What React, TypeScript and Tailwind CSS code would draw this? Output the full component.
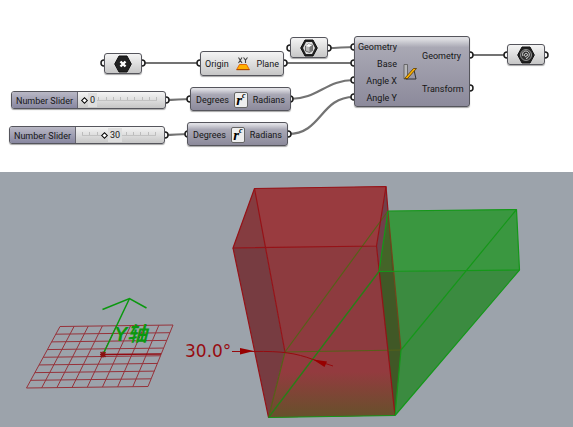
import React, { useState } from "react";

type Point = [number, number];

const silver = "bg-linear-to-b from-[#f4f4f4] via-[#dedede] to-[#c6c6c6]";
const slate = "bg-linear-to-b from-[#e0e0e5] from-5% via-[#a9a8b5] via-30% to-[#8c8a9b]";
const frame = "rounded-[3px] border border-[#55555c] shadow-[0_1px_1px_rgba(0,0,0,0.35)]";

const wires = [
  "M142 63H200",
  "M284 63H354",
  "M166 100C175 100 181 99 190 99",
  "M165 135C174 135 179 134 188 134",
  "M328 48C338 48 344 47 354 47",
  "M290 99C318 99 326 80 354 80",
  "M288 134C322 134 320 97 354 97",
  "M470 55H507",
];

const leftPorts: Point[] = [
  [104, 63], [200, 63], [190, 99], [188, 134], [290, 48],
  [354, 47], [354, 63], [354, 80], [354, 97], [507, 55],
];

const rightPorts: Point[] = [
  [142, 63], [284, 63], [166, 100], [165, 135], [290, 99],
  [288, 134], [328, 48], [470, 55], [470, 88], [545, 55],
];

function Wires() {
  return (
    <svg className="absolute left-0 top-0 h-[172px] w-[573px]" viewBox="0 0 573 172" fill="none" aria-hidden="true">
      {wires.map((d) => (
        <path key={d} d={d} stroke="#737373" strokeWidth="2.2" />
      ))}
      {leftPorts.map(([x, y]) => (
        <circle key={`l${x}-${y}`} cx={x} cy={y} r="3" fill="#fff" stroke="#1c1c1c" strokeWidth="1.5" />
      ))}
      {rightPorts.map(([x, y]) => (
        <circle key={`r${x}-${y}`} cx={x} cy={y} r="3" fill="#fff" stroke="#1c1c1c" strokeWidth="1.5" />
      ))}
    </svg>
  );
}

function Hexagon({ children }: { children: React.ReactNode }) {
  return (
    <svg className="h-[18px] w-[18px]" viewBox="0 0 18 18" aria-hidden="true">
      <path d="M5 1H13L17.300 9L13 17H5L.7 9Z" fill="#222" stroke="#111" strokeLinejoin="round" />
      {children}
    </svg>
  );
}

function Param({ place, children }: { place: string; children: React.ReactNode }) {
  return (
    <div className={`absolute flex h-[21px] w-[38px] items-center justify-center ${place} ${frame} ${silver}`}>
      <Hexagon>{children}</Hexagon>
    </div>
  );
}

function Radians({ place }: { place: string }) {
  return (
    <div className={`absolute flex h-6 w-[101px] items-center justify-between px-[5px] pt-px ${place} ${frame} ${slate}`}>
      <span>Degrees</span>
      <span className="flex h-4 w-[14px] items-start justify-center rounded-[2px] border border-[#666] bg-[#eeeeee] font-['Liberation_Serif',serif] text-[15px] font-bold italic leading-[14px] text-black">
        r<span className="text-[8px] leading-[6px]">c</span>
      </span>
      <span>Radians</span>
    </div>
  );
}

function NumberSlider({ id, place, initial, track }: { id: string; place: string; initial: number; track: string }) {
  const [value, setValue] = useState(initial);
  return (
    <div className={`absolute flex h-[18px] overflow-hidden ${place} ${frame} ${silver}`}>
      <label
        htmlFor={id}
        className="flex w-[66px] shrink-0 items-center justify-center border-r border-[#66656f] bg-linear-to-b from-[#b9b8c5] to-[#8887a0] pt-px"
      >
        Number Slider
      </label>
      <div className={`relative mr-1.5 flex-1 ${track}`}>
        <div className="absolute inset-x-[2px] top-[3px] flex h-[6px] justify-between border-b border-[#c2c2c2]">
          {Array.from({ length: 11 }, (_, i) => (
            <span key={i} className="mt-0.5 w-px bg-[#bcbcbc]" />
          ))}
        </div>
        <output
          htmlFor={id}
          className="absolute top-px ml-1 flex h-[14px] items-center bg-[#dedede] pl-0.5 pr-0.5"
          style={{ left: `calc(${value}% + ${2 - value * 0.05}px)` }}
        >
          {value}
        </output>
        <input
          id={id}
          type="range"
          min={0}
          max={100}
          value={value}
          onChange={(e) => setValue(Number(e.target.value))}
          className="absolute inset-0 h-4 w-full appearance-none bg-transparent [&::-webkit-slider-thumb]:h-[5px] [&::-webkit-slider-thumb]:w-[5px] [&::-webkit-slider-thumb]:rotate-45 [&::-webkit-slider-thumb]:appearance-none [&::-webkit-slider-thumb]:border [&::-webkit-slider-thumb]:border-black [&::-webkit-slider-thumb]:bg-white"
        />
      </div>
    </div>
  );
}

function NodeCanvas() {
  return (
    <section
      aria-label="Definition"
      className="relative h-[172px] w-full overflow-hidden bg-white font-[Roboto,'Liberation_Sans',sans-serif] text-[9px] leading-3 text-[#161616]"
    >
      <Wires />
      <Param place="left-[104px] top-[53px]">
        <path d="M6.500 6.500L11.500 11.500M11.500 6.500L6.500 11.500" stroke="#fff" strokeWidth="2.400" />
      </Param>
      <div className={`absolute left-[200px] top-[51px] flex h-[25px] w-[84px] items-center justify-between px-1 ${frame} ${silver}`}>
        <span>Origin</span>
        <svg className="h-[14px] w-[14px]" viewBox="0 0 14 14" aria-hidden="true">
          <path d="M2.500 .5L6 6M6 .5L2.500 6M7.500 .5L9.500 3L11.500 .5M9.500 3V6" fill="none" stroke="#444" strokeWidth="1.100" />
          <path d="M3.500 7.500H10.500L13.300 12.500H.7Z" fill="#ffb000" stroke="#e46a08" />
          <path d="M.5 12.700H13.500" stroke="#a34505" />
        </svg>
        <span>Plane</span>
      </div>
      <NumberSlider id="angle-x" place="left-[11px] top-[91px] w-[155px]" initial={0} track="ml-1" />
      <NumberSlider id="angle-y" place="left-[9px] top-[126px] w-[156px]" initial={30} track="ml-1" />
      <Radians place="left-[190px] top-[87px]" />
      <Radians place="left-[187px] top-[122px]" />
      <Param place="left-[290px] top-[37px]">
        <path d="M6 3H12L15 9L12 15H6L3 9Z" fill="#ddd" />
        <path d="M5.500 7L8.500 5L12.500 6V11.500L9.500 13.500L5.500 12Z" fill="#bbb" stroke="#444" strokeWidth=".7" />
        <path d="M5.500 7L9.500 8L12.500 6L8.500 5Z" fill="#fff" />
        <path d="M9.500 8L12.500 6V11.500L9.500 13.500Z" fill="#777" />
      </Param>
      <div
        className={`absolute left-[354px] top-[36px] flex h-[71px] w-[116px] items-center justify-between bg-linear-to-b from-[#dedee2] from-3% via-[#a9a8b4] via-15% to-[#8c8a9b] pl-1 pr-[5px] pt-px ${frame}`}
      >
        <div className="flex w-[38px] flex-col items-end gap-[5px]">
          <span>Geometry</span>
          <span>Base</span>
          <span>Angle X</span>
          <span>Angle Y</span>
        </div>
        <svg className="h-4 w-[14px]" viewBox="0 0 14 16" aria-hidden="true">
          <path d="M1 .5H4.500V15H1Z" fill="#b8b8ba" stroke="#555" strokeWidth=".8" />
          <path d="M11 6L13 15H3" fill="none" stroke="#333" />
          <path d="M10.500 4.500H13.500L4.500 14.500H1.500Z" fill="#ffb300" stroke="#553800" strokeWidth=".8" />
        </svg>
        <div className="flex w-[42px] flex-col gap-[21px]">
          <span>Geometry</span>
          <span>Transform</span>
        </div>
      </div>
      <Param place="left-[507px] top-[44px]">
        <circle cx="9" cy="9" r="5.500" fill="#333" stroke="#aaa" strokeWidth=".8" />
        <path d="M6 10C4.500 6.500 7.500 4 10.500 5.500C14 7.500 12 12 9 12.500M9 11C7 10 7 7.500 9 7.500C11.500 7.500 11 10.500 9 10" fill="none" stroke="#eee" strokeWidth=".9" />
      </Param>
    </section>
  );
}

function mix(a: Point, b: Point, t: number): Point {
  return [a[0] + (b[0] - a[0]) * t, a[1] + (b[1] - a[1]) * t];
}

function PlaneGrid() {
  const corners: Record<"tl" | "tr" | "br" | "bl", Point> = {
    tl: [60, 326.5],
    tr: [173, 325],
    br: [148, 386.5],
    bl: [26.5, 388],
  };
  const lines = Array.from({ length: 9 }, (_, i) => {
    const t = i / 8;
    return [
      [mix(corners.tl, corners.bl, t), mix(corners.tr, corners.br, t)],
      [mix(corners.tl, corners.tr, t), mix(corners.bl, corners.br, t)],
    ];
  }).flat();
  return (
    <g stroke="#96323a" strokeWidth="1">
      {lines.map(([a, b], i) => (
        <line key={i} x1={a[0]} y1={a[1]} x2={b[0]} y2={b[1]} />
      ))}
    </g>
  );
}

function Viewport() {
  return (
    <section aria-label="Perspective view" className="bg-[#9ca3ab]">
      <svg className="block h-auto w-full" viewBox="0 172 573 255" fill="none">
        <defs>
          <linearGradient id="floor" gradientUnits="userSpaceOnUse" x1="0" y1="372" x2="0" y2="417">
            <stop offset="0" stopColor="#64522a" stopOpacity="0" />
            <stop offset="1" stopColor="#64522a" stopOpacity=".95" />
          </linearGradient>
        </defs>
        <PlaneGrid />
        <path d="M103 354.500L161 354" stroke="#930b12" strokeWidth="1.500" />
        <path d="M103 354.500L129.500 298.500M102.500 309.500L129.500 298.500L146.500 308" stroke="#0b980f" strokeWidth="1.500" />
        <path d="M100.500 352L105.500 357M105.500 352L100.500 357M103 351.500V357.500M100 354.500H106" stroke="#8a1010" strokeWidth="1.400" />
        <text
          x="114"
          y="341"
          fill="#0b980f"
          className="font-['Liberation_Sans','Noto_Sans_CJK_SC',sans-serif] text-[20px] font-bold italic"
        >
          Y轴
        </text>

        <path d="M388 211L516.500 209.500L519.500 270L379 271.500Z" fill="#3a9740" />
        <path d="M379 271.500L519.500 270L395 415.500Z" fill="#3b8b40" />
        <path d="M233 248L254.500 188.500L285 352L268.500 417.500Z" fill="#773c41" />
        <path d="M233 248L254.500 188.500L265.500 247.500Z" fill="#853c40" />
        <path d="M254.500 188.500L386 186.500L376.500 246L395 415.500L268.500 417.500L285 352Z" fill="#8d3b3f" />
        <path d="M254.500 188.500L386 186.500L376.500 246L265.500 247.500Z" fill="#993b3f" />
        <path d="M285 352L390 351L395 415.500L268.500 417.500Z" fill="#933b3f" />
        <path d="M280 372H390L395 415.500L268.500 417.500Z" fill="url(#floor)" />
        <path d="M386 186.500L376.500 246L379 271.500L388 211Z" fill="#70404a" />
        <path d="M388 211L379 271.500L395 415.500L401 350Z" fill="#405826" />
        <path d="M388 211L379 271.500L382 272L392 271.500Z" fill="#446428" />

        <g stroke="#566018" strokeWidth="1.200">
          <path d="M388 211L285 352L268.500 417.500M285 352L401 350" />
        </g>
        <g stroke="#961217" strokeWidth="1.200" strokeLinejoin="round">
          <path d="M254.500 188.500L386 186.500L376.500 246L233 248Z" />
          <path d="M233 248L268.500 417.500M254.500 188.500L285 352M376.500 246L395 415.500" />
          <path d="M386 186.500L388 211" />
        </g>
        <path d="M388 211L401 350" stroke="#74451b" strokeWidth="1.200" />
        <g stroke="#159719" strokeWidth="1.200" strokeLinejoin="round">
          <path d="M388 211L516.500 209.500L519.500 270L379 271.500Z" />
          <path d="M516.500 209.500L401 350L395 415.500M519.500 270L395 415.500" />
          <path d="M395 415.500L268.500 417.500" />
        </g>
        <path d="M379 271.500L268.500 417.500" stroke="#2a7d18" strokeWidth="1.400" />

        <g stroke="#960b0f" strokeWidth="1">
          <path d="M232 351.500H254C281 351 296 353 313 359.500L333 366" />
        </g>
        <path d="M240 348L254 351L240 354.500ZM313 359.500L327 361.500L324.500 367Z" fill="#970000" />
        <text x="185" y="357" fill="#970b10" className="font-['DejaVu_Sans',sans-serif] text-[17px]">
          30.0°
        </text>
      </svg>
    </section>
  );
}

export default function App() {
  return (
    <main className="w-full bg-white">
      <NodeCanvas />
      <Viewport />
    </main>
  );
}
